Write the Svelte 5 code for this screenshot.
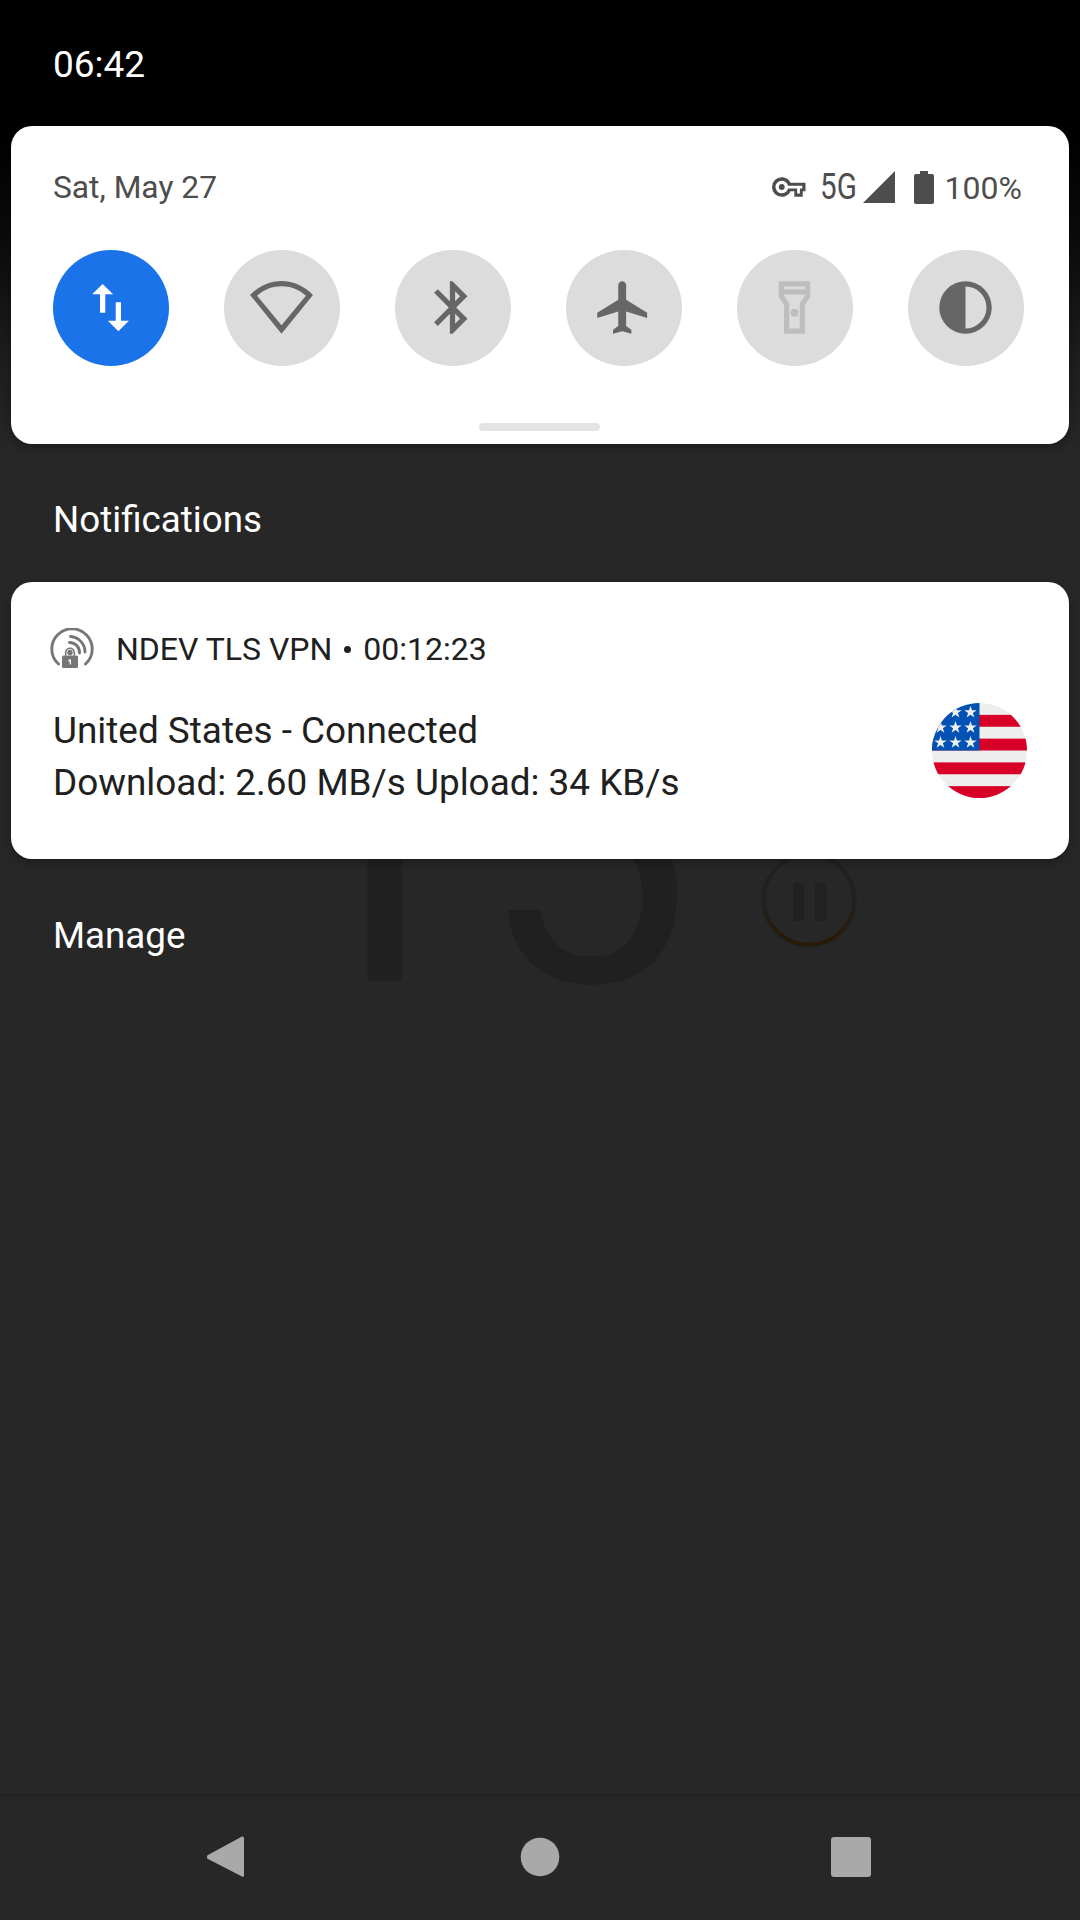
<script lang="ts">
	type Tile = { name: string; state: 'on' | 'off' | 'disabled'; path: string };

	const tiles: Tile[] = [
		{
			name: 'Mobile data',
			state: 'on',
			path: 'M16 17.01V10h-2v7.01h-3L15 21l4-3.99h-3zM9 3L5 6.99h3V14h2V6.99h3L9 3z'
		},
		{
			name: 'Wi-Fi',
			state: 'off',
			path: 'M0 7.2C3.3 3.9 7.5 1.9 12 1.9S20.7 3.9 24 7.2L12 22zM2.7 7.5L12 18.8 21.3 7.5C18.6 5.1 15.4 3.9 12 3.9S5.4 5.1 2.7 7.5z'
		},
		{
			name: 'Bluetooth',
			state: 'off',
			path: 'M17.71 7.71L12 2h-1v7.59L6.41 5 5 6.41 10.59 12 5 17.59 6.41 19 11 14.41V22h1l5.71-5.71-4.3-4.29 4.3-4.29zM13 5.83l1.88 1.88L13 9.59V5.83zm1.88 10.46L13 18.17v-3.76l1.88 1.88z'
		},
		{
			name: 'Airplane mode',
			state: 'off',
			path: 'M21 16v-2l-8-5V3.5c0-.83-.67-1.5-1.5-1.5S10 2.67 10 3.5V9l-8 5v2l8-2.5V19l-2 1.5V22l3.5-1 3.5 1v-1.5L13 19v-5.5l8 2.5z'
		},
		{
			name: 'Flashlight',
			state: 'disabled',
			path: 'M18 2H6v6l2 3v11h8V11l2-3V2zm-2 2v1H8V4h8zm-2 6.4V20h-4v-9.6L8 7.4V7h8v.4l-2 3zM12 12.5a1.5 1.5 0 1 0 0 3a1.5 1.5 0 1 0 0-3z'
		},
		{
			name: 'Dark theme',
			state: 'off',
			path: 'M12 2a10 10 0 1 0 0 20a10 10 0 1 0 0-20zM12 4a8 8 0 0 1 0 16z'
		}
	];

	const star_columns = [8.5, 23.5, 38.5];
	const star_rows = [9.3, 24.5, 39.5];
</script>

<div class="screen">
	<div class="clock_widget">
		<span class="digits">15</span>
		<svg class="pause" viewBox="0 0 96 96">
			<defs>
				<linearGradient id="ring" x1="0" y1="0" x2="0" y2="1">
					<stop offset="0.5" stop-color="#281a05" stop-opacity="0" />
					<stop offset="0.9" stop-color="#281a05" />
				</linearGradient>
			</defs>
			<circle cx="48" cy="48" r="45.5" fill="none" stroke="#212121" stroke-width="4" />
			<circle cx="48" cy="48" r="44.5" fill="none" stroke="url(#ring)" stroke-width="3.5" />
			<path d="M32 31h11v38H32zM54 31h11v38H54z" fill="#212121" />
		</svg>
	</div>

	<header>06:42</header>

	<section class="card quick_settings">
		<div class="status">
			<span class="date">Sat, May 27</span>
			<div class="system">
				<svg class="key" viewBox="0 0 24 14">
					<path
						fill-rule="evenodd"
						d="M7 0c2.8 0 5.2 1.6 6.3 4H24v6h-2v4h-6v-4h-2.7C12.2 12.4 9.8 14 7 14A7 7 0 0 1 7 0zM7 2.5a4.5 4.5 0 1 0 0 9c2.2 0 4-1.4 4.5-3.4H18v3.5h2V8.1h1.7V6.1H11.5C11 4 9.2 2.5 7 2.5zM7 4.9a2.1 2.1 0 1 0 0 4.2a2.1 2.1 0 1 0 0-4.2z"
					/>
				</svg>
				<span class="network">5G</span>
				<svg class="signal" viewBox="0 0 32 32"><path d="M32 0v32H0z" /></svg>
				<svg class="battery" viewBox="0 0 20 33">
					<path d="M6 0h8v3h4a2 2 0 0 1 2 2v26a2 2 0 0 1-2 2H2a2 2 0 0 1-2-2V5a2 2 0 0 1 2-2h4z" />
				</svg>
				<span class="percent">100%</span>
			</div>
		</div>
		<div class="tiles">
			{#each tiles as tile}
				<button class={`tile ${tile.state}`} aria-label={tile.name}>
					<svg viewBox="0 0 24 24"><path fill-rule="evenodd" d={tile.path} /></svg>
				</button>
			{/each}
		</div>
		<div class="handle"></div>
	</section>

	<h2>Notifications</h2>

	<section class="card notification">
		<div class="app">
			<svg class="vpn" viewBox="0 0 44 42">
				<g fill="none" stroke="#757678" stroke-linecap="round">
					<path d="M8.5 36A20.2 20.2 0 1 1 35.5 36" stroke-width="2.9" />
					<path d="M20.5 8.5A15.5 15.5 0 0 1 35 24M19.5 14.5A10 10 0 0 1 29.5 25" stroke-width="2.9" />
					<path d="M15.7 27v-2.5a4.3 4.3 0 0 1 8.6 0V27" stroke-width="1.6" />
				</g>
				<circle cx="20" cy="24.5" r="2.7" fill="#757678" />
				<rect x="12" y="27.5" width="16" height="12.5" rx="1.5" fill="#757678" />
				<path d="M18.5 31.5h2.5v5h-1.2v-3h-1.3z" fill="#fff" />
			</svg>
			<span>NDEV TLS VPN</span>
			<i></i>
			<span>00:12:23</span>
		</div>
		<div class="content">
			<p>United States - Connected<br />Download: 2.60 MB/s Upload: 34 KB/s</p>
			<svg class="flag" viewBox="0 0 95 95">
				<clipPath id="round"><circle cx="47.5" cy="47.5" r="47.5" /></clipPath>
				<g clip-path="url(#round)">
					<rect width="95" height="95" fill="#eee" />
					{#each [1, 3, 5, 7] as stripe}
						<rect y={stripe * 11.875} width="95" height="11.875" fill="#d80027" />
					{/each}
					<rect width="47.5" height="47.5" fill="#0052b4" />
					{#each star_rows as y}
						{#each star_columns as x}
							<path
								transform={`translate(${x} ${y})`}
								d="M0-6.5l1.5 4.5h4.7L2.4.8l1.5 4.5L0 2.5l-3.9 2.8 1.5-4.5L-6.2-2h4.7z"
								fill="#eee"
							/>
						{/each}
					{/each}
				</g>
			</svg>
		</div>
	</section>

	<h2 class="manage">Manage</h2>

	<nav>
		<svg viewBox="0 0 44 44"><path d="M37 3.5v37q0 2-2 1L1 24q-2.5-2 0-4L35 1.5q2-.5 2 2z" /></svg>
		<svg viewBox="0 0 44 44"><circle cx="22" cy="22" r="19.3" /></svg>
		<svg viewBox="0 0 44 44"><rect x="2" y="2" width="40" height="40" rx="3" /></svg>
	</nav>
</div>

<style>
	:global(body) {
		margin: 0;
		background: #272727;
	}

	.screen {
		position: relative;
		box-sizing: border-box;
		display: flex;
		flex-direction: column;
		width: 1080px;
		height: 1920px;
		overflow: hidden;
		background: linear-gradient(#000 126px, #0b0b0b 240px, #1c1c1c 350px, #272727 455px);
		font-family: Roboto, sans-serif;
		font-size: 37px;
		color: #fff;
	}

	/* dimmed app showing through behind the shade */
	.clock_widget {
		position: absolute;
		left: 267px;
		top: 654px;
		color: #202020;
	}

	.digits {
		position: absolute;
		left: 0;
		top: -2px;
		font-size: 378px;
		line-height: 400px;
	}

	.pause {
		position: absolute;
		left: 494px;
		top: 198px;
		width: 96px;
		height: 96px;
	}

	header {
		height: 126px;
		box-sizing: border-box;
		padding: 43px 53px 0;
		line-height: 44px;
	}

	.card {
		position: relative;
		box-sizing: border-box;
		margin: 0 11px;
		border-radius: 21px;
		background: #fff;
		box-shadow: 0 3px 8px rgba(0, 0, 0, 0.3);
	}

	.quick_settings {
		height: 318px;
		padding: 41px 45px 0 42px;
		color: #4d4d4d;
	}

	.status {
		display: flex;
		justify-content: space-between;
		height: 40px;
		padding-right: 2px;
		line-height: 40px;
		font-size: 32px;
	}

	.date {
		font-size: 31.75px;
		line-height: 42px;
	}

	.system {
		display: flex;
		align-items: center;
		fill: #4d4d4d;
	}

	.key {
		width: 33.5px;
		height: 20px;
		margin-right: 14px;
	}

	.network {
		width: 43px;
		font-size: 37px;
		transform: scaleX(0.8);
		transform-origin: left;
	}

	.signal {
		width: 32px;
		height: 32px;
		margin-right: 19px;
	}

	.battery {
		width: 20px;
		height: 33px;
		margin-right: 11px;
	}

	.percent {
		padding-top: 2px;
	}

	.tiles {
		display: flex;
		justify-content: space-between;
		margin: 43px 0 0;
	}

	.tile {
		display: flex;
		align-items: flex-start;
		box-sizing: border-box;
		width: 116px;
		height: 116px;
		padding: 26px;
		border: none;
		border-radius: 50%;
		background: #dcdcdc;
		fill: #666;
	}

	.tile svg {
		flex: none;
		width: 63px;
		height: 63px;
	}

	.on {
		background: #1a73e8;
		fill: #fff;
	}

	.disabled {
		fill: #bebebe;
	}

	.handle {
		width: 121px;
		height: 8px;
		margin: 57px auto 0 426px;
		border-radius: 4px;
		background: #e4e4e4;
	}

	h2 {
		height: 138px;
		margin: 0;
		padding: 54px 53px 0;
		box-sizing: border-box;
		font-size: 36.75px;
		font-weight: 400;
		line-height: 44px;
	}

	.manage {
		padding-top: 55px;
	}

	.notification {
		height: 277px;
		padding: 45px 42px 0 39px;
		color: #202020;
	}

	.app {
		display: flex;
		align-items: center;
		height: 44px;
		font-size: 32px;
	}

	.vpn {
		width: 44px;
		height: 42px;
		margin-right: 22px;
	}

	.app i {
		width: 7px;
		height: 7px;
		margin: 0 12px;
		border-radius: 50%;
		background: #202020;
	}

	.content {
		display: flex;
		justify-content: space-between;
		padding: 32px 0 0 3px;
	}

	p {
		margin: 2px 0 0;
		font-size: 36.9px;
		line-height: 52px;
	}

	.flag {
		width: 95px;
		height: 95px;
	}

	nav {
		display: flex;
		justify-content: space-between;
		box-sizing: border-box;
		height: 126px;
		margin-top: auto;
		padding: 38px 207px 0;
		border-top: 3px solid #222;
		fill: #a9a9a9;
	}

	nav svg {
		width: 44px;
		height: 44px;
	}
</style>
